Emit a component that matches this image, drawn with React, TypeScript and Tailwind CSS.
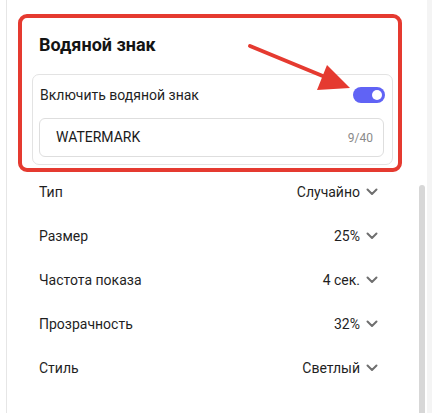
import React from 'react';

type Option = {
    label: string;
    value: string;
}

const options: Option[] = [
    { label: 'Тип', value: 'Случайно' },
    { label: 'Размер', value: '25%' },
    { label: 'Частота показа', value: '4 сек.' },
    { label: 'Прозрачность', value: '32%' },
    { label: 'Стиль', value: 'Светлый' },
];

const Chevron = () => (
    <svg width="12" height="8" viewBox="0 0 12 8" fill="none">
        <path d="M1.5 1.5L6 6L10.5 1.5" stroke="#6f6f6f" strokeWidth="2" strokeLinecap="round" strokeLinejoin="round" />
    </svg>
);

export default function App() {
    return (
        <div className="relative flex h-[413px] w-[432px] overflow-hidden bg-white font-['Roboto','Liberation_Sans',sans-serif] text-[#1f1f1f]">
            <div className="w-[6px] bg-white" />
            <div className="flex w-[421px] border-l border-[#e6e6e6] bg-white">
                <div className="flex-1 pl-[11px] pt-[14px]">
                    {/* Блок водяного знака */}
                    <div className="w-[384px] rounded-[9px] border-4 border-[#e53a30] pb-[3px] pl-[10px] pr-[5px]">
                        <h3 className="pl-[7px] pt-[15px] text-[18px] font-bold leading-[24px] text-[#141414]">
                            Водяной знак
                        </h3>
                        <div className="mt-[17px] rounded-[7px] border border-[#e3e3e3] pb-[7px] pl-[6px] pr-[8px]">
                            <div className="flex h-[40px] items-center justify-between pl-[1px]">
                                <span className="text-[14px]">Включить водяной знак</span>
                                <div className="mr-[-1px] flex h-[16px] w-[32px] items-center justify-end rounded-full bg-[#6063f5] pr-[3px]">
                                    <div className="h-[10px] w-[10px] rounded-full bg-white" />
                                </div>
                            </div>
                            <div className="mt-[3px] flex h-[39px] items-center justify-between rounded-[6px] border border-[#dedede] pl-[16px] pr-[10px]">
                                <span className="text-[14px] text-[#1a1a1a]">WATERMARK</span>
                                <span className="text-[12px] text-[#8a8a8a]">9/40</span>
                            </div>
                        </div>
                    </div>

                    {/* Настройки */}
                    <div className="flex w-[384px] flex-col gap-[4px] pl-[21px] pr-[24px]">
                        {options.map((o) => (
                            <div key={o.label} className="flex h-[40px] items-center justify-between text-[14px]">
                                <span>{o.label}</span>
                                <div className="flex items-center gap-[6px]">
                                    <span>{o.value}</span>
                                    <Chevron />
                                </div>
                            </div>
                        ))}
                    </div>
                </div>
                <div className="w-[8px] pr-[2px]">
                    <div className="mt-[185px] h-[240px] w-[6px] rounded-t-full bg-[#d7d7d7]" />
                </div>
            </div>
            <div className="flex-1 bg-[#f4f4f4]" />

            {/* Стрелка */}
            <svg className="pointer-events-none absolute left-0 top-0" width="432" height="413" viewBox="0 0 432 413">
                <line x1="250" y1="46" x2="330" y2="79" stroke="#e53a30" strokeWidth="4" strokeLinecap="round" />
                <polygon points="327,65 317,90 350,88" fill="#e53a30" />
            </svg>
        </div>
    );
}
